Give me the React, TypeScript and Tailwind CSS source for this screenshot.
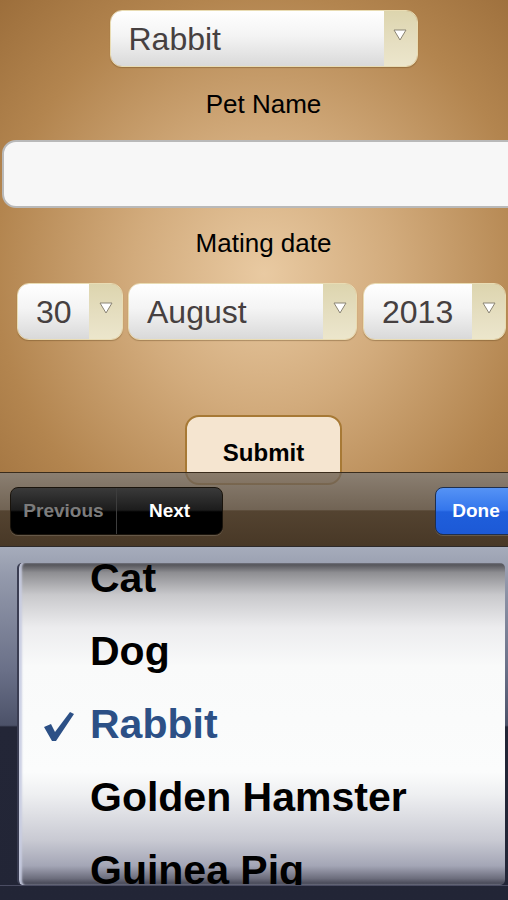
import React from "react";

const font = { fontFamily: '"Liberation Sans", Arial, sans-serif' };

function Arrow() {
  return (
    <svg width="14" height="12" viewBox="0 0 14 12">
      <path d="M1 1 L13 1 L7 11 Z" fill="#ffffff" stroke="#8a8474" strokeWidth="1" strokeLinejoin="round" />
    </svg>
  );
}

function Select({ label, className }: { label: string; className: string }) {
  return (
    <div
      className={`flex h-[57px] shrink-0 overflow-hidden rounded-[12px] border border-[#e9dcb3] shadow-[0_1px_1px_rgba(90,60,20,0.35)] ${className}`}
    >
      <div className="flex flex-1 items-center bg-[linear-gradient(to_bottom,#ffffff_0%,#f4f4f4_45%,#d9d9d9_100%)] pl-[18px] text-[32px] text-[#464040]">
        {label}
      </div>
      <div className="flex w-[33px] justify-center bg-[linear-gradient(to_bottom,#ddd5ae_0%,#e6dfc2_60%,#ece6cc_100%)] pt-[18px]">
        <Arrow />
      </div>
    </div>
  );
}

const pets = ["Cat", "Dog", "Rabbit", "Golden Hamster", "Guinea Pig"];

export default function App() {
  return (
    <div className="relative h-[900px] w-[508px] overflow-hidden" style={font}>
      {/* form */}
      <div className="flex h-[472px] flex-col items-center bg-[radial-gradient(ellipse_at_52%_58%,#e9caa2_0%,#d2ab7c_35%,#b3854f_72%,#9c6e3b_100%)] pl-[19px] pt-[10px]">
        <Select label="Rabbit" className="w-[308px]" />
        <div className="mt-[24px] h-[26px] text-[26px] leading-[26px] text-black">Pet Name</div>
        <div className="ml-[-17px] mt-[23px] h-[68px] w-[540px] shrink-0 self-start rounded-[14px] border-2 border-[#b9b9b9] bg-[#f7f7f7]" />
        <div className="mt-[22px] h-[26px] text-[26px] leading-[26px] text-black">Mating date</div>
        <div className="ml-[-2px] mt-[27px] flex self-start">
          <Select label="30" className="w-[106px]" />
          <Select label="August" className="ml-[5px] w-[229px]" />
          <Select label="2013" className="ml-[6px] w-[143px]" />
        </div>
        <div className="mt-[75px] flex h-[70px] w-[157px] shrink-0 items-center justify-center rounded-[14px] border-2 border-[#a77935] bg-[#f5e5d0] pt-[6px] text-[24px] font-bold text-black">
          Submit
        </div>
      </div>

      {/* keyboard toolbar */}
      <div className="relative z-10 flex h-[74px] items-start border-t border-[#3a2c1c] bg-[linear-gradient(to_bottom,rgba(120,106,90,0.86)_0%,rgba(98,83,66,0.9)_50%,rgba(78,61,42,0.97)_52%,rgba(72,56,38,1)_100%)] pt-[14px]">
        <div className="ml-[10px] flex h-[48px] w-[213px] overflow-hidden rounded-[8px] border border-[#1a140c] bg-[linear-gradient(to_bottom,#3a3a3a_0%,#1c1c1c_48%,#000000_52%,#000000_100%)] shadow-[0_1px_0_rgba(255,255,255,0.15)]">
          <div className="flex w-[106px] items-center justify-center border-r border-[#3d3d3d] text-[19px] font-bold text-[#7c7c7c]">
            Previous
          </div>
          <div className="flex flex-1 items-center justify-center text-[19px] font-bold text-white">Next</div>
        </div>
        <div className="ml-auto mr-[-9px] flex h-[48px] w-[82px] shrink-0 items-center justify-center rounded-[8px] border border-[#1f2f4d] bg-[linear-gradient(to_bottom,#5593f5_0%,#3476ec_48%,#1f5fdc_52%,#1c59d6_100%)] text-[19px] font-bold text-white shadow-[0_1px_0_rgba(255,255,255,0.15)]">
          Done
        </div>
      </div>

      {/* picker */}
      <div className="h-[354px] border-t border-[#2e2a2a] bg-[linear-gradient(to_bottom,#a6acbb_0%,#949aac_8%,#6a7088_35%,#4c5269_50.5%,#232637_51%,#222536_100%)] pl-[17px] pt-[16px]">
        <div className="relative h-[322px] w-[488px] overflow-hidden rounded-[5px] border-l-2 border-[#3a3d52] bg-[linear-gradient(to_bottom,#4a4a50_0%,#8e8e92_3%,#c9c9cc_10%,#ececee_20%,#f9fafa_32%,#fbfcfc_65%,#eeeff1_72%,#c9cad3_86%,#a4a6b6_94%,#6c6d7c_98%,#3e3f4e_100%)] shadow-[inset_3px_0_2px_rgba(200,204,225,0.9)]">
          <div className="mt-[-21px] flex flex-col">
            {pets.map((p) => (
              <div key={p} className="relative flex h-[73px] items-center pl-[71px]">
                {p === "Rabbit" && (
                  <svg className="absolute left-[24px] top-[22px]" width="32" height="32" viewBox="0 0 32 32">
                    <path d="M1 17 L8 14 L12 22 L27 2 L31 4 L13 31 L9 31 Z" fill="#2c5086" />
                  </svg>
                )}
                <span className={`text-[41px] font-bold ${p === "Rabbit" ? "text-[#2c5086]" : "text-black"}`}>{p}</span>
              </div>
            ))}
          </div>
        </div>
        <div className="ml-[-17px] h-[1px] w-[508px] bg-[#4b4d63]" />
      </div>
    </div>
  );
}
